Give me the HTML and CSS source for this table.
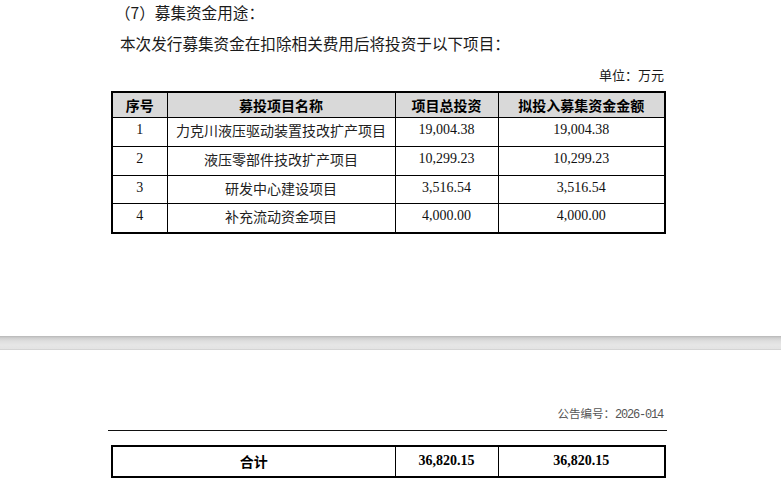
FILE: index.html
```html
<!DOCTYPE html>
<html lang="zh-CN">
<head>
<meta charset="utf-8">
<title>募集资金用途</title>
<link rel="stylesheet" href="styles.css">
</head>
<body>
<div class="page page-top">
  <p class="title">（7）募集资金用途：</p>
  <p class="intro">本次发行募集资金在扣除相关费用后将投资于以下项目：</p>
  <p class="unit">单位：万元</p>
  <table class="grid">
    <colgroup>
      <col class="c1"><col class="c2"><col class="c3"><col class="c4">
    </colgroup>
    <thead>
      <tr><th>序号</th><th>募投项目名称</th><th>项目总投资</th><th>拟投入募集资金金额</th></tr>
    </thead>
    <tbody>
      <tr><td class="num">1</td><td class="zh">力克川液压驱动装置技改扩产项目</td><td class="num">19,004.38</td><td class="num">19,004.38</td></tr>
      <tr><td class="num">2</td><td class="zh">液压零部件技改扩产项目</td><td class="num">10,299.23</td><td class="num">10,299.23</td></tr>
      <tr><td class="num">3</td><td class="zh">研发中心建设项目</td><td class="num">3,516.54</td><td class="num">3,516.54</td></tr>
      <tr><td class="num">4</td><td class="zh">补充流动资金项目</td><td class="num">4,000.00</td><td class="num">4,000.00</td></tr>
    </tbody>
  </table>
</div>
<div class="gap"></div>
<div class="page page-bottom">
  <p class="docno">公告编号：<span class="mono">2026-014</span></p>
  <div class="rule"></div>
  <table class="grid total">
    <colgroup>
      <col class="c12"><col class="c3"><col class="c4">
    </colgroup>
    <tbody>
      <tr><td class="zh-b">合计</td><td class="num-b">36,820.15</td><td class="num-b">36,820.15</td></tr>
    </tbody>
  </table>
</div>
</body>
</html>
```
FILE: styles.css
```css
html, body {
  margin: 0;
  padding: 0;
  background: #ffffff;
}
body {
  width: 781px;
  height: 491px;
  overflow: hidden;
  font-family: "Noto Sans CJK SC", "Liberation Serif", serif;
  color: #1a1a1a;
}
p { margin: 0; }

.page-top {
  height: 336px;
  padding-left: 111px;
  box-sizing: border-box;
}
.title {
  font-size: 15.6px;
  line-height: 24px;
  padding-left: 4px;
}
.intro {
  font-size: 15.6px;
  line-height: 24px;
  margin-top: 7px;
  padding-left: 9px;
}
.unit {
  width: 553px;
  text-align: right;
  font-size: 13px;
  line-height: 20px;
  margin-top: 10px;
}

.grid {
  border-collapse: collapse;
  width: 553px;
  table-layout: fixed;
  border: 2px solid #000;
  margin-top: 6px;
}
.grid col.c1 { width: 55px; }
.grid col.c2 { width: 228px; }
.grid col.c3 { width: 103px; }
.grid col.c4 { width: 167px; }
.grid col.c12 { width: 283px; }

.grid th, .grid td {
  border: 1px solid #000;
  padding: 0;
  text-align: center;
  vertical-align: middle;
}
.grid th {
  background: #d9d9d9;
  height: 24px;
  font-size: 14px;
  font-weight: 700;
  color: #000;
  line-height: 20px;
}
.grid td {
  height: 28.75px;
  font-size: 14px;
  line-height: 20px;
  padding-bottom: 3px;
  box-sizing: border-box;
}
.grid td.zh {
  font-family: "Noto Sans CJK SC", sans-serif;
  color: #222;
}
.grid td.num {
  font-family: "Liberation Serif", serif;
  color: #111;
}

.gap {
  height: 13px;
  background: linear-gradient(#b7b7b7 0, #cfcfcf 2px, #dedede 5px, #e6e6e6 9px, #e3e3e3 13px);
  border-bottom: 1px solid #d4d4d4;
}

.page-bottom {
  padding-left: 108px;
}
.docno {
  width: 555px;
  height: 18px;
  text-align: right;
  font-size: 11.5px;
  line-height: 18px;
  color: #555;
  margin-top: 54px;
}
.mono {
  font-family: "Liberation Mono", "DejaVu Sans Mono", monospace;
  font-size: 12px;
  line-height: 18px;
  letter-spacing: -1.2px;
}
.rule {
  width: 559px;
  height: 0;
  border-top: 1px solid #111;
  margin-top: 8px;
}
.grid.total {
  margin-top: 14px;
  margin-left: 3px;
  width: 553px;
}
.grid.total td {
  height: 31px;
  padding-bottom: 2px;
}
.zh-b {
  font-family: "Noto Sans CJK SC", sans-serif;
  font-weight: 700;
  font-size: 14px;
  color: #000;
}
.num-b {
  font-family: "Liberation Serif", serif;
  font-weight: 700;
  font-size: 14px;
  color: #000;
}
```
